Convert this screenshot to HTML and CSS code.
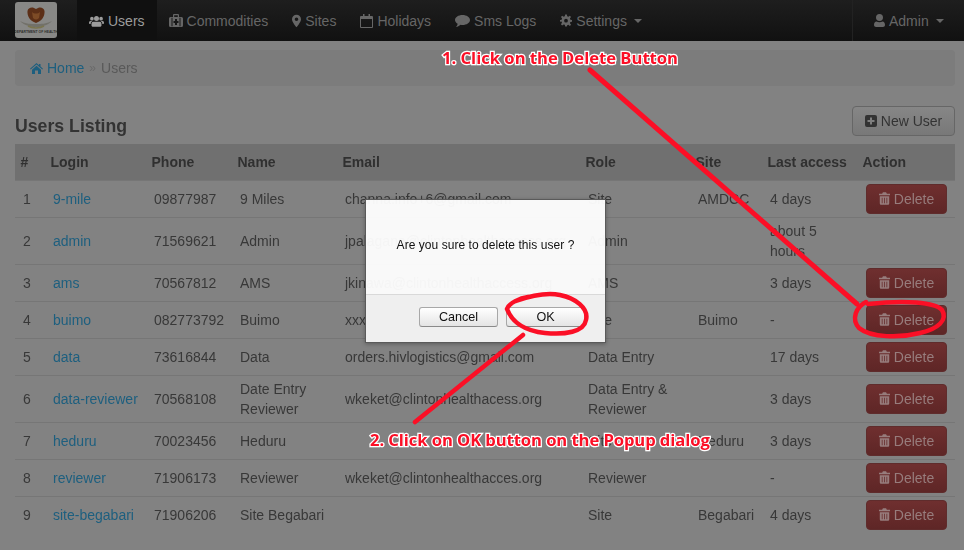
FILE: index.html
```html
<!DOCTYPE html>
<html lang="en">
<head>
<meta charset="utf-8">
<title>Users Listing</title>
<link rel="stylesheet" href="styles.css">
</head>
<body>
<svg class="defs" width="0" height="0" aria-hidden="true">
  <symbol id="i-trash" viewBox="0 0 14 16"><path fill="currentColor" d="M5 0h4l1 2h4v2H0V2h4zM1 5h12v9.500a1.500 1.500 0 0 1-1.500 1.500h-9A1.500 1.500 0 0 1 1 14.500zm2.500 2v7h1V7zm3 0v7h1V7zm3 0v7h1V7z" fill-rule="evenodd"/></symbol>
</svg>
<header class="navbar">
  <div class="brand">
    <svg viewBox="0 0 42 36" width="42" height="36" aria-hidden="true">
      <rect width="42" height="36" rx="3" fill="#888886"/>
      <path d="M5 19c6 3 11 3 16 3s10 0 16-3c-4 4-10 6-16 6s-12-2-16-6z" fill="#72716a"/>
      <path d="M21 21c-6-2-9-7-8.500-12C13 5.500 17.500 4 21 7c3.500-3 8-1.500 8.500 2 .5 5-2.500 10-8.500 12z" fill="#5c2f17"/>
      <path d="M17 10c2 2 6 2 8 0l-1 6c-2 2-4 2-6 0z" fill="#7d4b26"/>
      <path d="M13 24c4 2.500 12 2.500 16 0" stroke="#7a7550" stroke-width="1.500" fill="none"/>
      <text class="brand-text" x="21" y="30.500" text-anchor="middle">DEPARTMENT OF HEALTH</text>
    </svg>
  </div>
  <nav class="nav">
    <a class="nav-item active">
      <svg class="ico" viewBox="0 0 18 14" width="15" height="14"><path fill="currentColor" d="M9 1a3 3 0 1 1 0 6 3 3 0 0 1 0-6zM3.500 2a2.200 2.200 0 1 1 0 4.400 2.200 2.200 0 0 1 0-4.400zm11 0a2.200 2.200 0 1 1 0 4.400 2.200 2.200 0 0 1 0-4.400zM5 8h8c1.500 0 2 1.500 2 3v1.500c0 1-1 1.500-2 1.500H5c-1 0-2-.5-2-1.500V11c0-1.500.5-3 2-3zM0 9c0-1 .5-2 1.800-2H4c-1.500 1-2 2-2 3.500H1c-.5 0-1-.5-1-1.500zm18 0c0-1-.5-2-1.800-2H14c1.500 1 2 2 2 3.500h1c.5 0 1-.5 1-1.500z"/></svg>
      <span>Users</span></a>
    <a class="nav-item">
      <svg class="ico" viewBox="0 0 14 13" width="14" height="13"><path fill="currentColor" fill-rule="evenodd" d="M5 0h4a1 1 0 0 1 1 1v2h2.500A1.500 1.500 0 0 1 14 4.500v7a1.500 1.500 0 0 1-1.500 1.500h-11A1.500 1.500 0 0 1 0 11.500v-7A1.500 1.500 0 0 1 1.500 3H4V1a1 1 0 0 1 1-1zm.2 1.200V3h3.600V1.200zM2.500 3.800v8.400h1V3.800zm8 0v8.400h1V3.800zM6 5v2H4.500v2H6v2h2V9h1.500V7H8V5z"/></svg>
      <span>Commodities</span></a>
    <a class="nav-item">
      <svg class="ico" viewBox="0 0 10 14" width="9" height="14"><path fill="currentColor" fill-rule="evenodd" d="M5 0a5 5 0 0 1 5 5c0 2.500-3 6.500-5 9-2-2.500-5-6.500-5-9a5 5 0 0 1 5-5zm0 3a2 2 0 1 0 0 4 2 2 0 0 0 0-4z"/></svg>
      <span>Sites</span></a>
    <a class="nav-item">
      <svg class="ico" viewBox="0 0 13 14" width="13" height="14"><path fill="currentColor" fill-rule="evenodd" d="M3 0h1.500v2h4V0H10v2h2a1 1 0 0 1 1 1v10a1 1 0 0 1-1 1H1a1 1 0 0 1-1-1V3a1 1 0 0 1 1-1h2zM1 5v8h11V5z"/></svg>
      <span>Holidays</span></a>
    <a class="nav-item">
      <svg class="ico" viewBox="0 0 15 13" width="15" height="13"><path fill="currentColor" d="M7.500 1C11.600 1 15 3.300 15 6s-3.400 5-7.500 5c-.7 0-1.300-.1-2-.2C4.300 12 2.600 12.800 1 13c.8-1 1.500-2 1.600-3.300C1 8.800 0 7.500 0 6c0-2.700 3.400-5 7.500-5z"/></svg>
      <span>Sms Logs</span></a>
    <a class="nav-item">
      <svg class="ico" viewBox="0 0 14 14" width="12" height="13"><path fill="currentColor" fill-rule="evenodd" d="M6 0h2l.4 2 1.400.6L11.500 1.500 12.900 3 11.600 4.500l.5 1.500 1.900.4v2l-1.900.4-.5 1.400 1.300 1.700-1.400 1.400-1.700-1.200-1.400.5L8 14H6l-.4-1.900-1.400-.5-1.700 1.200-1.400-1.400 1.200-1.700-.5-1.400L0 8.400v-2l1.900-.4.5-1.500L1.100 3l1.400-1.500 1.700 1.100L5.600 2zM7 5a2.200 2.200 0 1 0 0 4.400A2.200 2.200 0 0 0 7 5z"/></svg>
      <span>Settings</span><i class="caret"></i></a>
  </nav>
  <a class="nav-item user-menu">
    <svg class="ico" viewBox="0 0 11 13" width="11" height="13"><path fill="currentColor" d="M5.500 0a3.300 3.300 0 0 1 0 7 3.300 3.300 0 0 1 0-7zM2.500 7.500c1.500 1 4.500 1 6 0 1.500 0 2.500 1.500 2.500 3.500 0 1.300-1 2-2 2H2c-1 0-2-.7-2-2 0-2 1-3.500 2.500-3.500z"/></svg>
    <span>Admin</span><i class="caret"></i></a>
</header>

<main class="page">
  <div class="breadcrumb">
    <svg class="home" viewBox="0 0 13 11" width="13" height="11"><path fill="currentColor" d="M6.500 0l2.500 2.200V1h1.500v2.600L13 5.800l-.7.800-5.800-5-5.800 5-.7-.8zM6.500 2.800L11 6.700V11H8V7.500H5V11H2V6.700z"/></svg>
    <a class="crumb-link">Home</a>
    <span class="crumb-sep">»</span>
    <span class="crumb-cur">Users</span>
  </div>
  <div class="title-row">
    <h1>Users Listing</h1>
    <button class="btn-new">
      <svg viewBox="0 0 12 12" width="12" height="12"><path fill="currentColor" fill-rule="evenodd" d="M2 0h8a2 2 0 0 1 2 2v8a2 2 0 0 1-2 2H2a2 2 0 0 1-2-2V2a2 2 0 0 1 2-2zm3 2.500V5H2.500v2H5v2.500h2V7h2.500V5H7V2.500z"/></svg>
      New User
    </button>
  </div>
  <table class="users">
    <colgroup>
      <col class="c1"><col class="c2"><col class="c3"><col class="c4"><col class="c5"><col class="c6"><col class="c7"><col class="c8"><col class="c9">
    </colgroup>
    <thead>
      <tr><th>#</th><th>Login</th><th>Phone</th><th>Name</th><th>Email</th><th>Role</th><th>Site</th><th>Last access</th><th>Action</th></tr>
    </thead>
    <tbody>
      <tr><td>1</td><td><a>9-mile</a></td><td>09877987</td><td>9 Miles</td><td>channa.info+6@gmail.com</td><td>Site</td><td>AMDCC</td><td>4 days</td><td><button class="btn-del"><svg width="11" height="13"><use href="#i-trash"/></svg>Delete</button></td></tr>
      <tr><td>2</td><td><a>admin</a></td><td>71569621</td><td>Admin</td><td>jpalagana@clintonhealthaccess.org</td><td>Admin</td><td></td><td>about 5 hours</td><td></td></tr>
      <tr><td>3</td><td><a>ams</a></td><td>70567812</td><td>AMS</td><td>jkinawa@clintonhealthaccess.org</td><td>AMS</td><td></td><td>3 days</td><td><button class="btn-del"><svg width="11" height="13"><use href="#i-trash"/></svg>Delete</button></td></tr>
      <tr><td>4</td><td><a>buimo</a></td><td>082773792</td><td>Buimo</td><td>xxx@gmail.com</td><td>Site</td><td>Buimo</td><td>-</td><td><button class="btn-del"><svg width="11" height="13"><use href="#i-trash"/></svg>Delete</button></td></tr>
      <tr><td>5</td><td><a>data</a></td><td>73616844</td><td>Data</td><td>orders.hivlogistics@gmail.com</td><td>Data Entry</td><td></td><td>17 days</td><td><button class="btn-del"><svg width="11" height="13"><use href="#i-trash"/></svg>Delete</button></td></tr>
      <tr><td>6</td><td><a>data-reviewer</a></td><td>70568108</td><td>Date Entry Reviewer</td><td>wkeket@clintonhealthacess.org</td><td>Data Entry &amp; Reviewer</td><td></td><td>3 days</td><td><button class="btn-del"><svg width="11" height="13"><use href="#i-trash"/></svg>Delete</button></td></tr>
      <tr><td>7</td><td><a>heduru</a></td><td>70023456</td><td>Heduru</td><td></td><td>Site</td><td>Heduru</td><td>3 days</td><td><button class="btn-del"><svg width="11" height="13"><use href="#i-trash"/></svg>Delete</button></td></tr>
      <tr><td>8</td><td><a>reviewer</a></td><td>71906173</td><td>Reviewer</td><td>wkeket@clintonhealthacces.org</td><td>Reviewer</td><td></td><td>-</td><td><button class="btn-del"><svg width="11" height="13"><use href="#i-trash"/></svg>Delete</button></td></tr>
      <tr><td>9</td><td><a>site-begabari</a></td><td>71906206</td><td>Site Begabari</td><td></td><td>Site</td><td>Begabari</td><td>4 days</td><td><button class="btn-del"><svg width="11" height="13"><use href="#i-trash"/></svg>Delete</button></td></tr>
    </tbody>
  </table>
</main>

<div class="dialog" role="dialog">
  <p class="dialog-msg">Are you sure to delete this user ?</p>
  <div class="dialog-foot">
    <button class="dlg-btn">Cancel</button>
    <button class="dlg-btn">OK</button>
  </div>
</div>

<svg class="marks" viewBox="0 0 964 550" width="964" height="550" aria-hidden="true">
  <g fill="none" stroke="#fb0f26" stroke-linecap="round" stroke-linejoin="round">
    <path stroke-width="5" d="M590 70L857 304"/>
    <path stroke-width="4.500" d="M866 302C856 307 851 319 859 328C871 338 900 338 920 333C938 329 948 320 942 310C935 302 905 300 868 304"/>
    <path stroke-width="4.500" d="M523 335L415 422"/>
    <path stroke-width="4.500" d="M516 301C530 296 545 292 560 295C575 298 589 308 586 320C584 332 565 335 545 333C525 331 512 322 507 309C509 303 520 298 528 297"/>
  </g>
</svg>
<div class="note note-1">1. Click on the Delete Button</div>
<div class="note note-2">2. Click on OK button on the Popup dialog</div>
</body>
</html>
```
FILE: styles.css
```css
* { box-sizing: border-box; }
html, body { margin: 0; padding: 0; }
body {
  width: 964px;
  height: 550px;
  overflow: hidden;
  position: relative;
  background: #828282;
  color: #383838;
  font: 14px/20px "Liberation Sans", Arial, sans-serif;
  filter: blur(.35px);
}
.defs { position: absolute; }

.navbar {
  height: 41px;
  display: flex;
  align-items: stretch;
  padding-left: 15px;
  background: linear-gradient(#1e1e1e, #111);
  color: #666;
}
.brand { width: 42px; height: 36px; margin: 2px 20px 0 0; }
.brand-text { font: 700 3.400px "Liberation Sans", sans-serif; fill: #2e2e2c; }
.nav { display: flex; flex: 1; }
.nav-item {
  display: flex;
  align-items: center;
  gap: 4px;
  padding: 0 12px;
  font-size: 14px;
}
.nav-item.active { background: #101010; color: #9c9c9c; }
.ico { flex: none; }
.caret {
  width: 0;
  height: 0;
  margin-left: 3px;
  border: 4px solid transparent;
  border-top-color: currentColor;
  border-bottom-width: 0;
}
.user-menu { width: 112px; padding-left: 21px; border-left: 1px solid #222; }

.page { padding: 9px 9px 0 15px; }
.breadcrumb {
  height: 36px;
  display: flex;
  align-items: center;
  gap: 4px;
  padding-left: 15px;
  background: #7c7c7c;
  border-radius: 4px;
  font-size: 14px;
}
.home { color: #1d5f7f; }
.crumb-link { color: #1d5f7f; }
.crumb-sep { color: #6a6a6a; font-size: 12px; padding: 0 1px; }
.crumb-cur { color: #595959; }
.title-row {
  height: 58px;
  display: flex;
  justify-content: space-between;
  align-items: flex-end;
  padding-bottom: 8px;
}
h1 {
  margin: 0 0 -2px;
  font-size: 17.700px;
  line-height: 24px;
  color: #333;
}
.btn-new {
  width: 103px;
  height: 30px;
  padding: 0;
  display: flex;
  align-items: center;
  justify-content: center;
  gap: 4px;
  font: 14px "Liberation Sans", Arial, sans-serif;
  color: #333;
  background: linear-gradient(#868686, #787878);
  border: 1px solid #666;
  border-radius: 4px;
}

.users { width: 940px; table-layout: fixed; border-collapse: collapse; }
.c1 { width: 30px; } .c2 { width: 101px; } .c3 { width: 86px; } .c4 { width: 105px; }
.c5 { width: 243px; } .c6 { width: 110px; } .c7 { width: 72px; } .c8 { width: 95px; } .c9 { width: 98px; }
th {
  height: 36px;
  padding: 1px 5px 0 5.500px;
  text-align: left;
  background: #707070;
  color: #303030;
}
td {
  padding: 3px 8px;
  border-top: 1px solid #767676;
  vertical-align: middle;
  font-size: 14px;
}
td a { color: #1d5f7f; }
.btn-del {
  display: flex;
  align-items: center;
  justify-content: center;
  gap: 4px;
  width: 81px;
  height: 30px;
  margin-left: 1px;
  padding: 0;
  font: 14px "Liberation Sans", Arial, sans-serif;
  color: #977c7c;
  background: linear-gradient(#6f2f2f, #5e2626);
  border: 1px solid #5f2c2c;
  border-radius: 4px;
}

.dialog {
  position: absolute;
  left: 365px;
  top: 199px;
  width: 241px;
  height: 144px;
  display: flex;
  flex-direction: column;
  background: rgba(255, 255, 255, .95);
  border: 1px solid #5a5a5a;
  box-shadow: 0 1px 4px rgba(0, 0, 0, .3);
}
.dialog-msg {
  flex: 1;
  margin: 0;
  padding-top: 37px;
  text-align: center;
  font-size: 12px;
  line-height: 16px;
  letter-spacing: .05px;
  color: #111;
}
.dialog-foot {
  height: 48px;
  display: flex;
  justify-content: flex-end;
  gap: 8px;
  padding: 12px 20px 0 0;
  background: rgba(238, 238, 238, .95);
  border-top: 1px solid #d9d9d9;
}
.dlg-btn {
  width: 79px;
  height: 20px;
  padding: 0;
  font: 12.600px "Liberation Sans", Arial, sans-serif;
  color: #111;
  background: linear-gradient(#fff, #e4e4e4);
  border: 1px solid #a8a8a8;
  border-bottom-color: #8a8a8a;
  border-radius: 3px;
}

.marks { position: absolute; left: 0; top: 0; pointer-events: none; }
.note {
  position: absolute;
  white-space: nowrap;
  font: 700 16.600px/22px "Open Sans", sans-serif;
  color: #fb0f26;
  -webkit-text-stroke: 2.500px #fff;
  paint-order: stroke fill;
}
.note-1 { left: 442px; top: 47px; }
.note-2 { left: 370px; top: 429px; letter-spacing: -.07px; }
```
